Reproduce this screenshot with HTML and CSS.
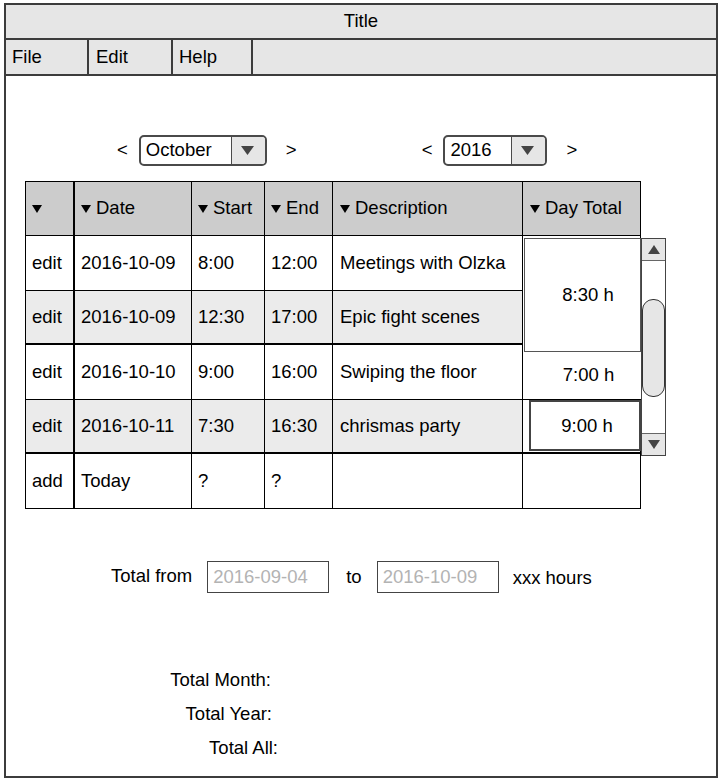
FILE: index.html
```html
<!DOCTYPE html>
<html lang="en">
<head>
<meta charset="utf-8">
<title>Time tracker</title>
<link rel="stylesheet" href="styles.css">
</head>
<body>
<div class="window">
  <div class="titlebar">Title</div>
  <div class="menubar">
    <div class="menu-item m-file">File</div>
    <div class="menu-item m-edit">Edit</div>
    <div class="menu-item m-help">Help</div>
  </div>
  <div class="content">
    <div class="nav-row">
      <div class="nav nav-month">
        <span class="arrow">&lt;</span>
        <div class="select select-month">
          <span class="select-value">October</span>
          <span class="select-btn"><svg width="13" height="9" viewBox="0 0 13 9"><polygon points="0,0 13,0 6.5,9" fill="#444"/></svg></span>
        </div>
        <span class="arrow">&gt;</span>
      </div>
      <div class="nav nav-year">
        <span class="arrow">&lt;</span>
        <div class="select select-year">
          <span class="select-value">2016</span>
          <span class="select-btn"><svg width="13" height="9" viewBox="0 0 13 9"><polygon points="0,0 13,0 6.5,9" fill="#444"/></svg></span>
        </div>
        <span class="arrow">&gt;</span>
      </div>
    </div>

    <div class="grid">
      <div class="cell head c1"><svg class="tri" width="10" height="8" viewBox="0 0 10 8"><polygon points="0,0 10,0 5,8" fill="#000"/></svg></div>
      <div class="cell head c2"><svg class="tri" width="10" height="8" viewBox="0 0 10 8"><polygon points="0,0 10,0 5,8" fill="#000"/></svg>Date</div>
      <div class="cell head c3"><svg class="tri" width="10" height="8" viewBox="0 0 10 8"><polygon points="0,0 10,0 5,8" fill="#000"/></svg>Start</div>
      <div class="cell head c4"><svg class="tri" width="10" height="8" viewBox="0 0 10 8"><polygon points="0,0 10,0 5,8" fill="#000"/></svg>End</div>
      <div class="cell head c5"><svg class="tri" width="10" height="8" viewBox="0 0 10 8"><polygon points="0,0 10,0 5,8" fill="#000"/></svg>Description</div>
      <div class="cell head c6"><svg class="tri" width="10" height="8" viewBox="0 0 10 8"><polygon points="0,0 10,0 5,8" fill="#000"/></svg>Day Total</div>

      <div class="cell c1">edit</div>
      <div class="cell c2">2016-10-09</div>
      <div class="cell c3">8:00</div>
      <div class="cell c4">12:00</div>
      <div class="cell c5">Meetings with Olzka</div>
      <div class="cell c6 daylist">
        <div class="day-item day-a">8:30 h</div>
        <div class="day-item day-b">7:00 h</div>
        <div class="day-item day-c">9:00 h</div>
        <div class="scrollbar">
          <div class="sb-btn sb-up"><svg width="12" height="9" viewBox="0 0 12 9"><polygon points="0,9 12,9 6,0" fill="#444"/></svg></div>
          <div class="sb-track"><div class="sb-thumb"></div></div>
          <div class="sb-btn sb-down"><svg width="12" height="9" viewBox="0 0 12 9"><polygon points="0,0 12,0 6,9" fill="#444"/></svg></div>
        </div>
      </div>

      <div class="cell c1 alt thick">edit</div>
      <div class="cell c2 alt thick">2016-10-09</div>
      <div class="cell c3 alt thick">12:30</div>
      <div class="cell c4 alt thick">17:00</div>
      <div class="cell c5 alt thick">Epic fight scenes</div>

      <div class="cell c1">edit</div>
      <div class="cell c2">2016-10-10</div>
      <div class="cell c3">9:00</div>
      <div class="cell c4">16:00</div>
      <div class="cell c5">Swiping the floor</div>

      <div class="cell c1 alt thick">edit</div>
      <div class="cell c2 alt thick">2016-10-11</div>
      <div class="cell c3 alt thick">7:30</div>
      <div class="cell c4 alt thick">16:30</div>
      <div class="cell c5 alt thick">chrismas party</div>

      <div class="cell c1">add</div>
      <div class="cell c2">Today</div>
      <div class="cell c3">?</div>
      <div class="cell c4">?</div>
      <div class="cell c5"></div>
      <div class="cell c6"></div>
    </div>

    <div class="range">
      <span class="range-label">Total from</span>
      <div class="field field-from">2016-09-04</div>
      <span class="range-to">to</span>
      <div class="field field-to">2016-10-09</div>
      <span class="range-hours">xxx hours</span>
    </div>

    <div class="totals">
      <div class="total t-month">Total Month:</div>
      <div class="total t-year">Total Year:</div>
      <div class="total t-all">Total All:</div>
    </div>
  </div>
</div>
</body>
</html>
```

FILE: styles.css
```css
* { box-sizing: border-box; }

html, body {
  margin: 0;
  padding: 0;
  background: #fff;
}

body {
  font-family: "Liberation Sans", Arial, sans-serif;
  font-size: 18.5px;
  color: #000;
}

.window {
  margin: 3px 0 0 4px;
  width: 714px;
  height: 775px;
  border: 2px solid #3c3c3c;
  display: flex;
  flex-direction: column;
  background: #fff;
}

.titlebar {
  height: 35px;
  background: #e6e6e6;
  border-bottom: 2px solid #3c3c3c;
  display: flex;
  align-items: center;
  justify-content: center;
  padding-bottom: 1px;
}

.menubar {
  height: 36px;
  background: #e6e6e6;
  border-bottom: 2px solid #3c3c3c;
  display: flex;
}

.menu-item {
  height: 100%;
  border-right: 2px solid #3c3c3c;
  display: flex;
  align-items: center;
  padding-left: 6px;
}
.m-file { width: 83px; }
.m-edit { width: 84px; padding-left: 7px; }
.m-help { width: 80px; padding-left: 6px; }

.content {
  flex: 1;
  display: flex;
  flex-direction: column;
}

/* month / year navigation */
.nav-row {
  margin-top: 59px;
  height: 31px;
  display: flex;
  padding-left: 111px;
}

.nav {
  display: flex;
  align-items: center;
}
.nav-year { margin-left: 125px; }

.arrow {
  display: inline-block;
  line-height: 1;
}

.select {
  height: 31px;
  border: 2px solid #4a4a4a;
  border-radius: 5px;
  display: flex;
  overflow: hidden;
  margin: 0 19px 0 11px;
}
.select-month { width: 128px; }
.select-year { width: 104px; }

.select-value {
  flex: 1;
  display: flex;
  align-items: center;
  padding-left: 5px;
  padding-bottom: 1px;
}

.select-btn {
  width: 34px;
  border-left: 1px solid #4a4a4a;
  background: #e6e6e6;
  display: flex;
  align-items: center;
  justify-content: center;
  padding-right: 2px;
}

/* table */
.grid {
  margin: 15px 0 0 19px;
  display: grid;
  grid-template-columns: 49px 117px 73px 68px 190px 118px;
  grid-template-rows: 54px 55px 54px 55px 54px 55px;
  width: 616px;
  border-top: 1px solid #000;
  border-left: 1px solid #000;
}

.cell {
  border-right: 1px solid #000;
  border-bottom: 1px solid #000;
  display: flex;
  align-items: center;
  padding-left: 6px;
  white-space: nowrap;
  background: #fff;
}
.cell.c1 { border-right-width: 2px; padding-left: 6px; }
.cell.c5 { padding-left: 7px; }
.cell.c6 { padding-left: 7px; }

.head { background: #cccccc; padding-bottom: 1px; }
.alt { background: #ebebeb; }
.thick { border-bottom-width: 2px; }

.tri {
  margin-right: 5px;
  flex: none;
  position: relative;
  top: 1px;
}

/* day total list */
.cell.daylist {
  grid-column: 6;
  grid-row: 2 / 6;
  border-bottom-width: 2px;
  padding-left: 0;
  display: flex;
  flex-direction: column;
  align-items: stretch;
  position: relative;
}

.day-item {
  display: flex;
  align-items: center;
  justify-content: center;
  background: #fff;
}

.day-a {
  margin: 2px 0 0 1px;
  width: 117px;
  height: 114px;
  border: 1px solid #555;
  padding-left: 11px;
}

.day-b {
  height: 48px;
  border-bottom: 1px solid #000;
  padding-left: 13px;
  padding-bottom: 1px;
  margin-right: -1px;
}

.day-c {
  margin-left: 6px;
  width: 112px;
  height: 51px;
  border: 2px solid #444;
  padding-left: 4px;
}

.scrollbar {
  position: absolute;
  left: 118px;
  top: 2px;
  width: 25px;
  height: 218px;
  border: 1px solid #444;
  background: #fff;
  display: flex;
  flex-direction: column;
}

.sb-btn {
  height: 22px;
  background: #e6e6e6;
  display: flex;
  align-items: center;
  justify-content: center;
  flex: none;
}
.sb-up { border-bottom: 1px solid #666; }
.sb-down { border-top: 1px solid #666; }

.sb-track {
  flex: 1;
  padding: 38px 0 0 0;
}

.sb-thumb {
  width: 23px;
  height: 98px;
  border: 1.5px solid #333;
  border-radius: 11px;
  background: #e6e6e6;
}

/* range row */
.range {
  margin-top: 52px;
  height: 31px;
  display: flex;
  align-items: center;
  padding-left: 105px;
}

.range-label { position: relative; top: -1px; }

.field {
  width: 122px;
  height: 32px;
  border: 1.5px solid #444;
  color: #b3b3b3;
  display: flex;
  align-items: center;
  padding-left: 5px;
}
.field-from { margin-left: 15px; }
.range-to { margin-left: 17px; }
.field-to { margin-left: 15px; }
.range-hours { margin-left: 14px; position: relative; top: 1px; }

/* totals */
.totals {
  margin-top: 71px;
  width: 272px;
  display: flex;
  flex-direction: column;
  align-items: flex-end;
}

.total {
  height: 34px;
  line-height: 34px;
}
.t-month { margin-right: 7px; }
.t-year { margin-right: 6px; }
```
